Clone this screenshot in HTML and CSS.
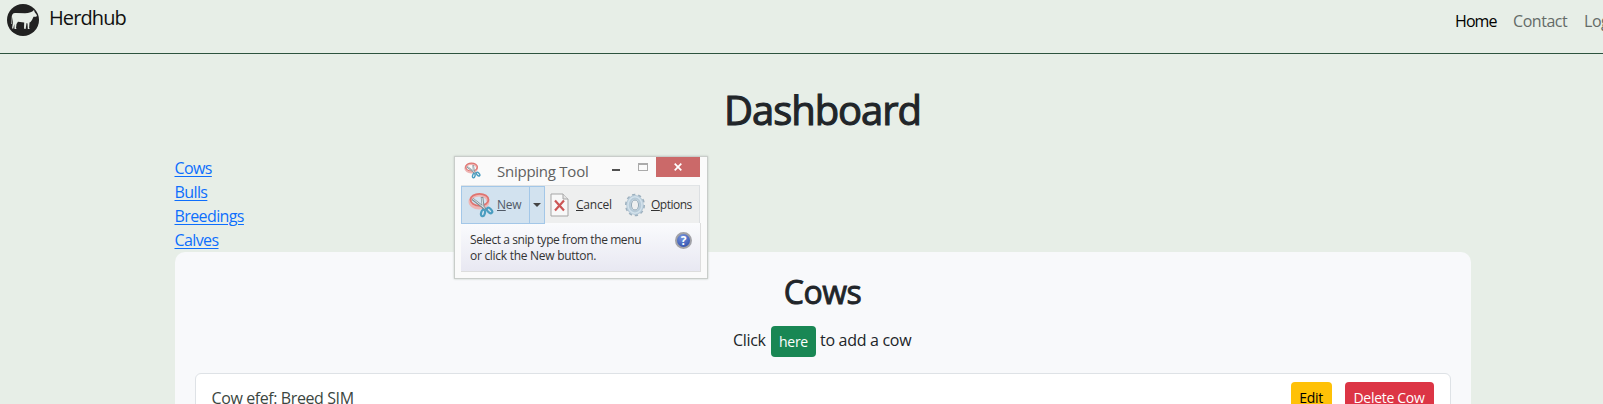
FILE: index.html
```html
<!DOCTYPE html>
<html lang="en">
<head>
<meta charset="utf-8">
<title>Herdhub</title>
<link rel="stylesheet" href="styles.css">
</head>
<body>
<nav class="navbar">
  <a class="brand">
    <svg class="logo" width="32" height="32" viewBox="0 0 32 32"><circle cx="16" cy="16" r="16" fill="#212121"/><path fill="#e7eee7" d="M5.500 10.200Q6.500 8.800 9 9.100L18 9.300Q21 9.300 23.500 8.300L25.300 7.600L27 6L27.600 8L30 11.300L29.300 12.800L26.500 12.800L25 16L23.500 18L22.500 18.600L22.100 24L22.800 25L20.800 25L20.500 19.500L19.500 19L18.800 24L19 24.800L17 24.800L17.200 18.500L11 17.800L9.500 20L9 24L9.600 25L7.500 25L7.300 20L6.300 24.500L5 24.500L6 18L5.700 13L5 20L4.400 20L4.800 12Z"/></svg>
    <span class="brand-name">Herdhub</span>
  </a>
  <div class="nav-links"><a class="active nav-home">Home</a><a class="nav-contact">Contact</a><a>Login</a></div>
</nav>
<main class="container">
  <h1><span>Dashboard</span></h1>
  <div class="index">
    <a>Cows</a><a>Bulls</a><a>Breedings</a><a>Calves</a>
  </div>
  <section class="panel">
    <h2><span>Cows</span></h2>
    <p class="add"><span class="before">Click</span><a class="btn green">here</a><span class="after">to add a cow</span></p>
    <div class="item">
      <span class="cow">Cow efef: Breed SIM</span>
      <div class="actions"><a class="btn yellow">Edit</a><a class="btn red">Delete Cow</a></div>
    </div>
  </section>
</main>
<aside class="snip">
  <header class="snip-title">
    <svg class="snip-icon" width="17" height="17" viewBox="0 0 26 26"><use href="#scissors"/></svg>
    <span class="snip-name">Snipping Tool</span>
    <i class="min"></i><i class="max"></i>
    <span class="close"><svg width="8" height="8" viewBox="0 0 8 8"><path d="M.7.700 7.300 7.300M7.300.700.700 7.300" stroke="#fff" stroke-width="1.700"/></svg></span>
  </header>
  <div class="tools">
    <div class="new">
      <svg width="26" height="26" viewBox="0 0 26 26"><g id="scissors" fill="none"><ellipse cx="11" cy="9.500" rx="9" ry="6.500" stroke="#eeb5b4" stroke-width="3"/><ellipse cx="11.500" cy="7.800" rx="9" ry="6" stroke="#df7470" stroke-width="1.800"/><path d="M4.500 7 18 17.500M14 5 15.500 17" stroke="#7f8f96" stroke-width="2.600"/><path d="M5 7 17 16.500M14 6 15 15" stroke="#dce5e8" stroke-width="1"/><ellipse cx="15" cy="21" rx="1.900" ry="3.300" transform="rotate(15 15 21)" stroke="#4a9dc0" stroke-width="2.200"/><ellipse cx="21.500" cy="18.500" rx="1.900" ry="3.300" transform="rotate(-45 21.500 18.500)" stroke="#4a9dc0" stroke-width="2.200"/></g></svg>
      <span><u>N</u>ew</span>
    </div>
    <div class="drop"></div>
    <svg class="cancel-icon" width="19" height="24" viewBox="0 0 19 24"><path d="M1 1H13L18 6V23H1Z" fill="#f8f8f8" stroke="#a5a5a5"/><path d="M13 1V6H18" fill="#e5e5e5" stroke="#a5a5a5"/><path d="M5 7.500 14 17.500M14 7.500 5 17.500" stroke="#cc5656" stroke-width="2.200"/></svg>
    <span class="cancel"><u>C</u>ancel</span>
    <svg class="gear" width="22" height="24" viewBox="0 0 22 24"><g fill="none"><ellipse cx="11" cy="12" rx="9" ry="10.300" stroke="#9db0be" stroke-width="2" stroke-dasharray="3.200 2.850"/><ellipse cx="11" cy="12" rx="6.500" ry="7.800" stroke="#b6cad8" stroke-width="4.500"/><ellipse cx="11" cy="12" rx="7" ry="8.200" stroke="#d2e1eb" stroke-width="1.500"/><ellipse cx="11" cy="12" rx="3.600" ry="5" stroke="#92a8b7" fill="#eeefef"/></g></svg>
    <span class="options"><u>O</u>ptions</span>
  </div>
  <div class="hint">
    <p><span class="line-a">Select a snip type from the menu</span><br><span class="line-b">or click the New button.</span></p>
    <span class="help">?</span>
  </div>
</aside>
</body>
</html>
```
FILE: styles.css
```css
* { box-sizing: border-box; }
body {
  margin: 0;
  height: 404px;
  overflow: hidden;
  background: #e7eee7;
  color: #212529;
  font: 16px/24px "Open Sans", "Noto Sans", sans-serif;
}
h1, h2, p { margin: 0; }
.navbar {
  display: flex;
  justify-content: space-between;
  height: 53px;
  border-bottom: 1px solid #2d533f;
  height: 54px;
}
.brand { display: flex; padding: 4px 0 0 7px; gap: 10px; }
.brand-name { font-size: 20px; line-height: 28px; color: #111; letter-spacing: -.9px; }
.nav-links { display: flex; width: 148px; padding-top: 9px; color: #646b68; letter-spacing: -.45px; }
.nav-links a { flex: none; }
.nav-links .active { color: #000; letter-spacing: -.9px; }
.nav-home { width: 58px; }
.nav-contact { width: 71px; }
.container { width: 1296px; margin: 0 0 0 174.500px; }
h1 { padding-top: 32px; height: 102px; font-size: 40px; line-height: 48px; font-weight: 400; -webkit-text-stroke: 1.1px; text-align: center; letter-spacing: -1.05px; }
.index { display: flex; flex-direction: column; align-items: flex-start; color: #0d6efd; letter-spacing: -.6px; }
.index a { text-decoration: underline; text-underline-offset: 2px; text-decoration-thickness: 1px; }
.panel { height: 152px; padding: 21px 20px 0; background: #f8f9fb; border-radius: 10px 10px 0 0; }
h2 { height: 53px; font-size: 32px; line-height: 38px; font-weight: 400; -webkit-text-stroke: .9px; text-align: center; letter-spacing: -.5px; }
.add { display: flex; justify-content: center; height: 47px; gap: 4px; letter-spacing: -.3px; line-height: 29px; }
.before { width: 34px; white-space: nowrap; }
.after { width: 92px; white-space: nowrap; }
.btn { display: block; height: 31px; padding: 0 8px; border-radius: 4px; font-size: 14px; line-height: 32px; white-space: nowrap; text-align: center; letter-spacing: -.3px; }
.green { width: 45px; background: #198754; color: #fff; }
.yellow { width: 41px; background: #ffc107; color: #000; }
.red { width: 89px; background: #dc3545; color: #fff; }
.item { display: flex; justify-content: space-between; height: 50px; padding: 8px 16px 0 16px; background: #fff; border: 1px solid #dee2e6; border-radius: 6px 6px 0 0; }
.cow { padding-top: 4px; color: #3b4641; letter-spacing: -.4px; }
.actions { display: flex; gap: 13px; }
.snip {
  position: absolute;
  left: 454px;
  top: 156px;
  width: 254px;
  height: 123px;
  padding: 0 6px 0 7px;
  background: #fafafa;
  border: 1px solid #c9cdca;
  box-shadow: 0 0 2px #bfc6c0;
  color: #333;
  font-size: 12px;
  line-height: 16px;
}
.snip-title { display: flex; height: 28px; }
.snip-icon { margin: 5px 0 0 2px; }
.snip-name { width: 115px; margin: 3px 0 0 16px; font-size: 15px; line-height: 22px; color: #606060; white-space: nowrap; letter-spacing: -.25px; }
.min { width: 8px; height: 2px; margin-top: 12px; background: #505050; }
.max { width: 10px; height: 8px; margin: 6px 8px 0 18px; border: 1px solid #aaa; border-top-width: 2px; }
.close { display: flex; align-items: center; justify-content: center; width: 44px; height: 20px; background: #cb6969; }
.tools { display: flex; align-items: center; width: 239px; height: 38px; margin-left: -1px; background: #eeefef; border-top: 1px solid #e1e4e6; border-right: 1px solid #dcdfe2; }
.new { display: flex; flex: none; align-items: center; width: 69px; height: 38px; padding-left: 6px; gap: 3px; background: #d2e2ef; border: 1px solid #a3c7e8; color: #505a67; letter-spacing: -.3px; }
.drop { display: flex; flex: none; align-items: center; justify-content: center; width: 15px; height: 38px; background: #d2e2ef; border: 1px solid #a3c7e8; border-left: 0; }
.drop::before { content: ""; border: 4px solid transparent; border-top-color: #444; border-bottom: 0; }
.cancel-icon { flex: none; margin-left: 5px; }
.cancel { width: 37px; margin-left: 7px; letter-spacing: -.2px; }
.gear { flex: none; margin-left: 11px; }
.options { margin-left: 5px; letter-spacing: -.5px; }
u { text-underline-offset: 1px; }
.hint { display: flex; justify-content: space-between; height: 49px; margin-left: -1px; padding: 9px 8px 0 9px; background: linear-gradient(#fafbfd, #e8e8f2); border-right: 1px solid #ddd; border-bottom: 1px solid #ddd; white-space: nowrap; }
.line-a { letter-spacing: -.42px; }
.line-b { letter-spacing: -.28px; }
.help { width: 17px; height: 17px; border-radius: 50%; border: 2px solid #a2a2a7; background: radial-gradient(circle at 40% 25%, #7796df, #2745a5); color: #fff; font-weight: 700; font-size: 12px; line-height: 13px; text-align: center; }
```
